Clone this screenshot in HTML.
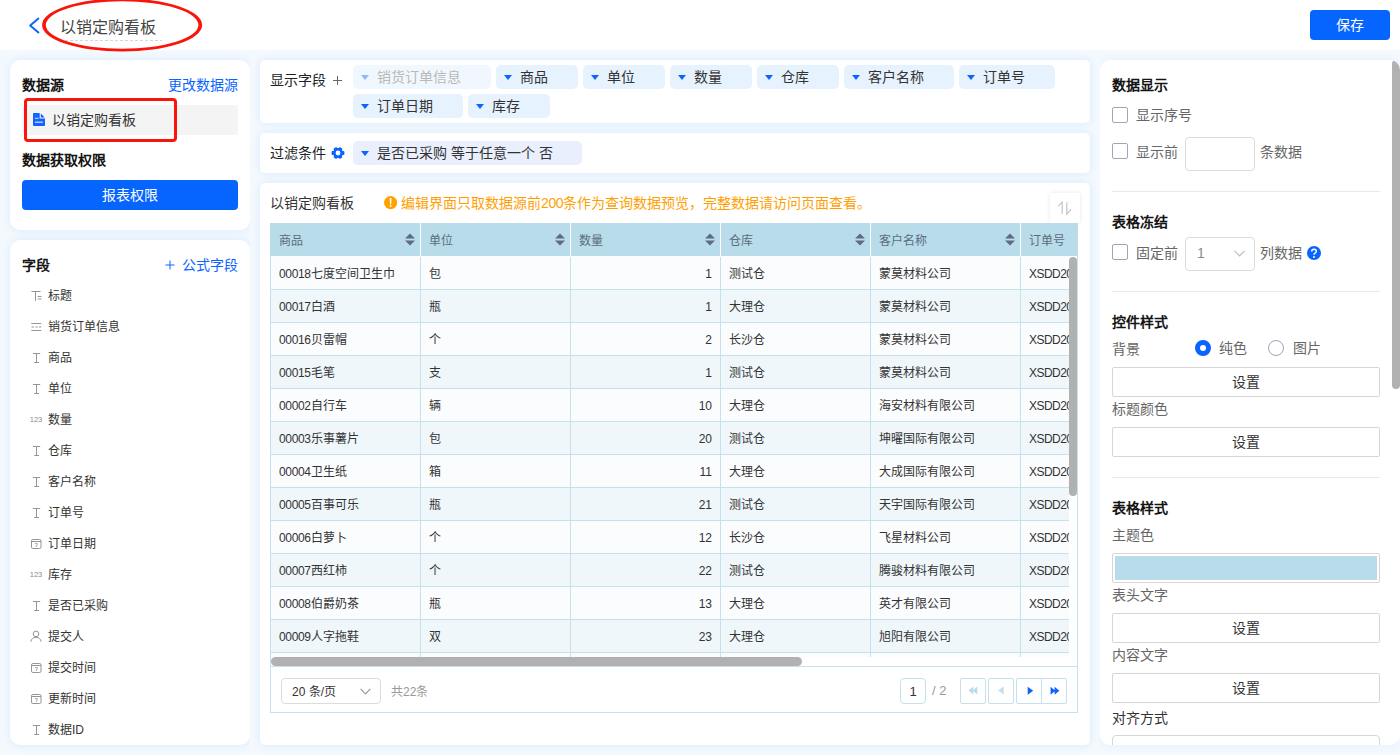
<!DOCTYPE html>
<html lang="zh-CN">
<head>
<meta charset="utf-8">
<title>以销定购看板</title>
<style>
*{box-sizing:border-box;margin:0;padding:0}
html,body{width:1400px;height:755px;overflow:hidden}
body{background:#f4f9fe;font-family:"Liberation Sans",sans-serif;font-size:14px;color:#333;position:relative}
.abs{position:absolute}
.col{position:absolute;top:50px;height:705px;overflow:hidden}
.hdr{position:absolute;left:0;top:0;width:1400px;height:50px;background:#fff}
.panel{position:absolute;background:#fff;box-shadow:0 0 10px #d8e9fc}
.r10{border-radius:10px}
.r4{border-radius:5px}
.t{position:absolute;white-space:nowrap;line-height:20px;height:20px}
.b{font-weight:bold;color:#141414}
.blue{color:#0a65ff}
.g6{color:#666}
.fi{position:absolute;left:0;width:240px;height:16px}
.fld{position:absolute;left:38px;top:0;font-size:12px;line-height:16px;height:16px;white-space:nowrap;color:#333}
.ico{position:absolute;left:19px;top:1px;width:14px;height:14px}
.num{position:absolute;left:18px;top:1px;width:16px;height:14px;font-size:7.6px;line-height:14px;color:#8c8c8c;text-align:center;letter-spacing:0}
.chip{position:absolute;height:24px;border-radius:5px;background:#e6f2fe;font-size:14px;line-height:24px;color:#333;white-space:nowrap;padding-left:24px}
.chip:before{content:"";position:absolute;left:8px;top:10px;border-left:4px solid transparent;border-right:4px solid transparent;border-top:5px solid #0a65ff}
.chip.dis{background:#f0f7ff;color:#b9b9b9}
.chip.dis:before{border-top-color:#8fb8ff}
.th{position:absolute;top:0;height:33px;width:151px;background:#b8dcea;color:#5d6b7c;font-size:12px;line-height:36px;padding-left:8px;border-left:1px solid #fff;white-space:nowrap}
.srt{position:absolute;left:134px;top:10px;width:10px;height:13px}
.row{position:absolute;left:0;width:900px;height:33px;border-bottom:1px solid #c5e1ed;background:#fbfcfe}
.row.e{background:#eff7fb}
.td{position:absolute;top:0;height:33px;width:150px;font-size:12px;line-height:35px;padding:0 8px;border-right:1px solid #c5e1ed;white-space:nowrap;color:#333;overflow:hidden}
.td.n{text-align:right}
.d{letter-spacing:-.35px}
.cb{position:absolute;left:12px;width:16px;height:16px;border:1px solid #a3a3bb;border-radius:2px;background:#fff}
.sep{position:absolute;left:12px;width:268px;height:1px;background:#e9e9e9}
.btn{position:absolute;left:12px;width:268px;height:30px;border:1px solid #d6d6d6;border-radius:2px;background:#fff;text-align:center;line-height:28px;font-size:14px;color:#333}
.inp{position:absolute;border:1px solid #dcdcdc;border-radius:4px;background:#fff}
.pg{position:absolute;top:11px;width:26px;height:26px;border:1px solid #c5e1ed;border-radius:2px;background:#fff}
</style>
</head>
<body>

<!-- header -->
<div class="hdr">
  <svg class="abs" style="left:27px;top:15px" width="14" height="20" viewBox="0 0 14 20"><path d="M11.4 3.6 L3.2 10.5 L11.4 17.4" fill="none" stroke="#0a65ff" stroke-width="2" stroke-linecap="round" stroke-linejoin="round"/></svg>
  <div class="t" style="left:60px;top:16px;font-size:16px;line-height:24px;height:24px;color:#444">以销定购看板</div>
  <svg class="abs" style="left:60px;top:40px" width="102" height="1" viewBox="0 0 102 1"><path d="M0 .5 H102" stroke="#d6d6d6" stroke-width="1" stroke-dasharray="3 2"/></svg>
  <div class="abs" style="left:1310px;top:10px;width:80px;height:30px;border-radius:4px;background:#0665ff;color:#fff;text-align:center;line-height:30px;font-size:14px">保存</div>
</div>

<div class="col" style="left:0;width:250px">
<!-- left panel 1 -->
<div class="panel r10" style="left:10px;top:10px;width:240px;height:170px">
  <div class="t b" style="left:12px;top:15px">数据源</div>
  <div class="t blue" style="right:12px;top:15px">更改数据源</div>
  <div class="abs" style="left:12px;top:45px;width:216px;height:30px;background:#f4f4f4;border-radius:2px"></div>
  <svg class="abs" style="left:23px;top:53px" width="12" height="13" viewBox="0 0 12 13"><path d="M.8 0 H6.7 V5.5 H12 V12.2 Q12 13 11.2 13 H.8 Q0 13 0 12.2 V.8 Q0 0 .8 0 Z" fill="#1463ff"/><path d="M7.8 .6 L11.7 4.5 H7.8 Z" fill="#1463ff"/><rect x="2" y="4.8" width="3.6" height="1" fill="#fff" opacity=".8"/><rect x="2" y="8.6" width="7.9" height="1.1" fill="#fff" opacity=".9"/></svg>
  <div class="t" style="left:42px;top:50px;color:#333">以销定购看板</div>
  <div class="abs" style="left:14px;top:38px;width:153px;height:44px;border:3px solid #fa140a;border-radius:4px"></div>
  <div class="t b" style="left:12px;top:90px">数据获取权限</div>
  <div class="abs" style="left:12px;top:120px;width:216px;height:30px;border-radius:4px;background:#0665ff;color:#fff;text-align:center;line-height:30px">报表权限</div>
</div>

<!-- left panel 2 -->
<div class="panel r10" style="left:10px;top:190px;width:240px;height:505px;overflow:hidden">
  <div class="t b" style="left:12px;top:15px">字段</div>
  <div class="t blue" style="right:12px;top:15px">公式字段</div>
  <svg class="abs" style="left:155px;top:20px" width="10" height="10" viewBox="0 0 10 10"><path d="M5 .5 V9.5 M.5 5 H9.5" stroke="#0a65ff" stroke-width="1" fill="none"/></svg>
  <div class="fi" style="top:48px"><svg class="ico" viewBox="0 0 14 14"><path d="M2.5 2.5 H11.5 M6.5 2.5 V11.8 M8.7 7.5 H12.5 M8.7 10 H12.5" fill="none" stroke="#959595" stroke-width="1"/></svg><div class="fld">标题</div></div>
  <div class="fi" style="top:79px"><svg class="ico" viewBox="0 0 14 14"><path d="M2.3 3.5 H12.2 M2.5 7 H5 M6.5 7 H8.7 M10 7 H12.2 M2.3 10.5 H12.2" fill="none" stroke="#959595" stroke-width="1"/></svg><div class="fld">销货订单信息</div></div>
  <div class="fi" style="top:110px"><svg class="ico" viewBox="0 0 14 14"><path d="M3.9 2.5 H11.2 M7.5 2.5 V11.5 M5.2 11.5 H10.1" fill="none" stroke="#959595" stroke-width="1"/></svg><div class="fld">商品</div></div>
  <div class="fi" style="top:141px"><svg class="ico" viewBox="0 0 14 14"><path d="M3.9 2.5 H11.2 M7.5 2.5 V11.5 M5.2 11.5 H10.1" fill="none" stroke="#959595" stroke-width="1"/></svg><div class="fld">单位</div></div>
  <div class="fi" style="top:172px"><div class="num">123</div><div class="fld">数量</div></div>
  <div class="fi" style="top:203px"><svg class="ico" viewBox="0 0 14 14"><path d="M3.9 2.5 H11.2 M7.5 2.5 V11.5 M5.2 11.5 H10.1" fill="none" stroke="#959595" stroke-width="1"/></svg><div class="fld">仓库</div></div>
  <div class="fi" style="top:234px"><svg class="ico" viewBox="0 0 14 14"><path d="M3.9 2.5 H11.2 M7.5 2.5 V11.5 M5.2 11.5 H10.1" fill="none" stroke="#959595" stroke-width="1"/></svg><div class="fld">客户名称</div></div>
  <div class="fi" style="top:265px"><svg class="ico" viewBox="0 0 14 14"><path d="M3.9 2.5 H11.2 M7.5 2.5 V11.5 M5.2 11.5 H10.1" fill="none" stroke="#959595" stroke-width="1"/></svg><div class="fld">订单号</div></div>
  <div class="fi" style="top:296px"><svg class="ico" viewBox="0 0 14 14"><rect x="2.5" y="2.5" width="9.5" height="9" rx="1.4" fill="none" stroke="#959595" stroke-width="1"/><path d="M2.5 4.5 H12" stroke="#959595" stroke-width="1" fill="none"/><path d="M5.9 6.6 H8.5 L7.1 10" stroke="#959595" stroke-width=".8" fill="none"/></svg><div class="fld">订单日期</div></div>
  <div class="fi" style="top:327px"><div class="num">123</div><div class="fld">库存</div></div>
  <div class="fi" style="top:358px"><svg class="ico" viewBox="0 0 14 14"><path d="M3.9 2.5 H11.2 M7.5 2.5 V11.5 M5.2 11.5 H10.1" fill="none" stroke="#959595" stroke-width="1"/></svg><div class="fld">是否已采购</div></div>
  <div class="fi" style="top:389px"><svg class="ico" viewBox="0 0 14 14"><circle cx="7" cy="3.9" r="2.8" fill="none" stroke="#959595" stroke-width="1"/><path d="M1.9 11.7 Q2.4 7.4 7 7.4 Q11.6 7.4 12.1 11.7" fill="none" stroke="#959595" stroke-width="1"/></svg><div class="fld">提交人</div></div>
  <div class="fi" style="top:420px"><svg class="ico" viewBox="0 0 14 14"><rect x="2.5" y="2.5" width="9.5" height="9" rx="1.4" fill="none" stroke="#959595" stroke-width="1"/><path d="M2.5 4.5 H12" stroke="#959595" stroke-width="1" fill="none"/><path d="M5.9 6.6 H8.5 L7.1 10" stroke="#959595" stroke-width=".8" fill="none"/></svg><div class="fld">提交时间</div></div>
  <div class="fi" style="top:451px"><svg class="ico" viewBox="0 0 14 14"><rect x="2.5" y="2.5" width="9.5" height="9" rx="1.4" fill="none" stroke="#959595" stroke-width="1"/><path d="M2.5 4.5 H12" stroke="#959595" stroke-width="1" fill="none"/><path d="M5.9 6.6 H8.5 L7.1 10" stroke="#959595" stroke-width=".8" fill="none"/></svg><div class="fld">更新时间</div></div>
  <div class="fi" style="top:482px"><svg class="ico" viewBox="0 0 14 14"><path d="M3.9 2.5 H11.2 M7.5 2.5 V11.5 M5.2 11.5 H10.1" fill="none" stroke="#959595" stroke-width="1"/></svg><div class="fld">数据ID</div></div>
</div>

</div>

<div class="col" style="left:250px;width:850px">
<!-- middle panel 1 : display fields -->
<div class="panel r4" style="left:10px;top:10px;width:830px;height:63px">
  <div class="t" style="left:10px;top:10px;color:#222">显示字段</div>
  <svg class="abs" style="left:73px;top:16px" width="9" height="9" viewBox="0 0 9 9"><path d="M4.5 0 V9 M0 4.5 H9" stroke="#666" stroke-width="1" fill="none"/></svg>
  <div class="chip dis" style="left:93px;top:5px;width:138px">销货订单信息</div>
  <div class="chip" style="left:236px;top:5px;width:82px">商品</div>
  <div class="chip" style="left:323px;top:5px;width:82px">单位</div>
  <div class="chip" style="left:410px;top:5px;width:82px">数量</div>
  <div class="chip" style="left:497px;top:5px;width:82px">仓库</div>
  <div class="chip" style="left:584px;top:5px;width:110px">客户名称</div>
  <div class="chip" style="left:699px;top:5px;width:96px">订单号</div>
  <div class="chip" style="left:93px;top:34px;width:110px">订单日期</div>
  <div class="chip" style="left:208px;top:34px;width:82px">库存</div>
</div>

<!-- middle panel 2 : filter -->
<div class="panel r4" style="left:10px;top:83px;width:830px;height:40px">
  <div class="t" style="left:10px;top:10px;color:#222">过滤条件</div>
  <svg class="abs" style="left:70.5px;top:13px" width="14" height="14" viewBox="0 0 14 14"><g fill="#0a65ff"><circle cx="7" cy="7" r="5"/><rect x=".6" y="5.1" width="12.8" height="3.8" rx=".9"/><rect x="1" y="5.1" width="12" height="3.8" rx=".9" transform="rotate(60 7 7)"/><rect x="1" y="5.1" width="12" height="3.8" rx=".9" transform="rotate(120 7 7)"/></g><circle cx="7" cy="7" r="2.45" fill="#fff"/></svg>
  <div class="chip" style="left:93px;top:8px;width:229px;background:#e9effc">是否已采购 等于任意一个 否</div>
</div>

<!-- middle panel 3 : table -->
<div class="panel r4" style="left:10px;top:133px;width:830px;height:562px">
  <div class="t" style="left:10px;top:10px;color:#333">以销定购看板</div>
  <svg class="abs" style="left:124px;top:13px" width="14" height="14" viewBox="0 0 14 14"><circle cx="6.6" cy="6.6" r="6.6" fill="#ffa200"/><path d="M5.7 2 H7.5 L7.2 8.6 H6 Z" fill="#fff"/><rect x="5.8" y="9.3" width="1.6" height="1.6" rx=".3" fill="#fff"/></svg>
  <div class="t" style="left:141px;top:10px;color:#ff9f05">编辑界面只取数据源前<span class="d">200</span>条作为查询数据预览，完整数据请访问页面查看。</div>
  <div class="abs" style="left:790px;top:10px;width:30px;height:30px;background:#fff;box-shadow:0 0 4px rgba(0,0,0,.10)"></div>
  <svg class="abs" style="left:797px;top:18px" width="16" height="15" viewBox="0 0 16 15"><path d="M1.2 5.2 L5.2 1.2 V13.1 M9.8 1.2 V13.1 L14.1 8.2" fill="none" stroke="#c4c4c4" stroke-width="1.2"/></svg>

  <div class="abs" style="left:10px;top:40px;width:808px;height:490px;border:1px solid #c5e1ed;border-top:none">
    <div class="abs" style="left:-1px;top:0;width:808px;height:33px;background:#b8dcea;overflow:hidden"><div class="th" style="left:0px;border-left-color:#b8dcea">商品<svg class="srt" viewBox="0 0 10 13"><path d="M5 .6 L10 5.4 H0 Z M5 12.4 L10 7.6 H0 Z" fill="#5f6b86"/></svg></div><div class="th" style="left:150px">单位<svg class="srt" viewBox="0 0 10 13"><path d="M5 .6 L10 5.4 H0 Z M5 12.4 L10 7.6 H0 Z" fill="#5f6b86"/></svg></div><div class="th" style="left:300px">数量<svg class="srt" viewBox="0 0 10 13"><path d="M5 .6 L10 5.4 H0 Z M5 12.4 L10 7.6 H0 Z" fill="#5f6b86"/></svg></div><div class="th" style="left:450px">仓库<svg class="srt" viewBox="0 0 10 13"><path d="M5 .6 L10 5.4 H0 Z M5 12.4 L10 7.6 H0 Z" fill="#5f6b86"/></svg></div><div class="th" style="left:600px">客户名称<svg class="srt" viewBox="0 0 10 13"><path d="M5 .6 L10 5.4 H0 Z M5 12.4 L10 7.6 H0 Z" fill="#5f6b86"/></svg></div><div class="th" style="left:750px">订单号</div></div>
    <div class="abs" style="left:0;top:33px;width:798px;height:401px;overflow:hidden;background:#fbfcfe">
      <div class="row" style="top:1px"><div class="td" style="left:0px"><span class="d">00018</span>七度空间卫生巾</div><div class="td" style="left:150px">包</div><div class="td n" style="left:300px">1</div><div class="td" style="left:450px">测试仓</div><div class="td" style="left:600px">蒙莫材料公司</div><div class="td" style="left:750px;letter-spacing:-.55px">XSDD20</div></div>
      <div class="row e" style="top:34px"><div class="td" style="left:0px"><span class="d">00017</span>白酒</div><div class="td" style="left:150px">瓶</div><div class="td n" style="left:300px">1</div><div class="td" style="left:450px">大理仓</div><div class="td" style="left:600px">蒙莫材料公司</div><div class="td" style="left:750px;letter-spacing:-.55px">XSDD20</div></div>
      <div class="row" style="top:67px"><div class="td" style="left:0px"><span class="d">00016</span>贝雷帽</div><div class="td" style="left:150px">个</div><div class="td n" style="left:300px">2</div><div class="td" style="left:450px">长沙仓</div><div class="td" style="left:600px">蒙莫材料公司</div><div class="td" style="left:750px;letter-spacing:-.55px">XSDD20</div></div>
      <div class="row e" style="top:100px"><div class="td" style="left:0px"><span class="d">00015</span>毛笔</div><div class="td" style="left:150px">支</div><div class="td n" style="left:300px">1</div><div class="td" style="left:450px">测试仓</div><div class="td" style="left:600px">蒙莫材料公司</div><div class="td" style="left:750px;letter-spacing:-.55px">XSDD20</div></div>
      <div class="row" style="top:133px"><div class="td" style="left:0px"><span class="d">00002</span>自行车</div><div class="td" style="left:150px">辆</div><div class="td n" style="left:300px">10</div><div class="td" style="left:450px">大理仓</div><div class="td" style="left:600px">海安材料有限公司</div><div class="td" style="left:750px;letter-spacing:-.55px">XSDD20</div></div>
      <div class="row e" style="top:166px"><div class="td" style="left:0px"><span class="d">00003</span>乐事薯片</div><div class="td" style="left:150px">包</div><div class="td n" style="left:300px">20</div><div class="td" style="left:450px">测试仓</div><div class="td" style="left:600px">坤曜国际有限公司</div><div class="td" style="left:750px;letter-spacing:-.55px">XSDD20</div></div>
      <div class="row" style="top:199px"><div class="td" style="left:0px"><span class="d">00004</span>卫生纸</div><div class="td" style="left:150px">箱</div><div class="td n" style="left:300px">11</div><div class="td" style="left:450px">大理仓</div><div class="td" style="left:600px">大成国际有限公司</div><div class="td" style="left:750px;letter-spacing:-.55px">XSDD20</div></div>
      <div class="row e" style="top:232px"><div class="td" style="left:0px"><span class="d">00005</span>百事可乐</div><div class="td" style="left:150px">瓶</div><div class="td n" style="left:300px">21</div><div class="td" style="left:450px">测试仓</div><div class="td" style="left:600px">天宇国际有限公司</div><div class="td" style="left:750px;letter-spacing:-.55px">XSDD20</div></div>
      <div class="row" style="top:265px"><div class="td" style="left:0px"><span class="d">00006</span>白萝卜</div><div class="td" style="left:150px">个</div><div class="td n" style="left:300px">12</div><div class="td" style="left:450px">长沙仓</div><div class="td" style="left:600px">飞星材料公司</div><div class="td" style="left:750px;letter-spacing:-.55px">XSDD20</div></div>
      <div class="row e" style="top:298px"><div class="td" style="left:0px"><span class="d">00007</span>西红柿</div><div class="td" style="left:150px">个</div><div class="td n" style="left:300px">22</div><div class="td" style="left:450px">测试仓</div><div class="td" style="left:600px">腾骏材料有限公司</div><div class="td" style="left:750px;letter-spacing:-.55px">XSDD20</div></div>
      <div class="row" style="top:331px"><div class="td" style="left:0px"><span class="d">00008</span>伯爵奶茶</div><div class="td" style="left:150px">瓶</div><div class="td n" style="left:300px">13</div><div class="td" style="left:450px">大理仓</div><div class="td" style="left:600px">英才有限公司</div><div class="td" style="left:750px;letter-spacing:-.55px">XSDD20</div></div>
      <div class="row e" style="top:364px"><div class="td" style="left:0px"><span class="d">00009</span>人字拖鞋</div><div class="td" style="left:150px">双</div><div class="td n" style="left:300px">23</div><div class="td" style="left:450px">大理仓</div><div class="td" style="left:600px">旭阳有限公司</div><div class="td" style="left:750px;letter-spacing:-.55px">XSDD20</div></div>
      <div class="row" style="top:397px"><div class="td" style="left:0px"></div><div class="td" style="left:150px"></div><div class="td n" style="left:300px"></div><div class="td" style="left:450px"></div><div class="td" style="left:600px"></div><div class="td" style="left:750px;letter-spacing:-.55px"></div></div>
    </div>
    <div class="abs" style="left:798px;top:34px;width:8px;height:239px;border-radius:4px;background:#b1b1b1"></div>
    <div class="abs" style="left:0;top:434px;width:806px;height:9px;background:#fff"></div>
    <div class="abs" style="left:0;top:434px;width:531px;height:9px;border-radius:4.5px;background:#b1b1b1"></div>
    <div class="abs" style="left:0;top:443px;width:806px;height:1px;background:#c5e1ed"></div>
    <div class="abs" style="left:0;top:444px;width:806px;height:45px">
      <div class="abs" style="left:10px;top:11px;width:100px;height:26px;border:1px solid #dcdcdc;border-radius:4px"></div>
      <div class="t" style="left:21px;top:15px;font-size:12px;color:#333">20 条/页</div>
      <svg class="abs" style="left:89px;top:21px" width="11" height="7" viewBox="0 0 11 7"><path d="M.6 .8 L5.5 5.8 L10.4 .8" fill="none" stroke="#9a9a9a" stroke-width="1.2"/></svg>
      <div class="t" style="left:120px;top:15px;font-size:12px;color:#999">共22条</div>
      <div class="pg" style="left:629px;border-radius:4px;text-align:center;line-height:25px;font-size:13px;color:#333">1</div>
      <div class="t" style="left:661px;top:14px;font-size:13px;color:#999">/ 2</div>
      <div class="pg" style="left:689px"><svg class="abs" style="left:-1px;top:-1px" width="26" height="26" viewBox="0 0 26 26"><path d="M8.5 12.5 L13.2 8.5 V16.5 Z M12.6 12.5 L17.3 8.5 V16.5 Z" fill="#b8dcea"/></svg></div>
      <div class="pg" style="left:717px"><svg class="abs" style="left:-1px;top:-1px" width="26" height="26" viewBox="0 0 26 26"><path d="M9.9 12.5 L15.8 8.5 V16.5 Z" fill="#c4e1ed"/></svg></div>
      <div class="pg" style="left:745px;border-radius:2px 0 0 2px"><svg class="abs" style="left:-1px;top:-1px" width="26" height="26" viewBox="0 0 26 26"><path d="M17.2 12.7 L11.7 8.7 V16.7 Z" fill="#0a65ff"/></svg></div>
      <div class="pg" style="left:770px;border-radius:0 2px 2px 0"><svg class="abs" style="left:-1px;top:-1px" width="26" height="26" viewBox="0 0 26 26"><path d="M14.3 12.7 L9.6 8.7 V16.7 Z M18.3 12.7 L13.6 8.7 V16.7 Z" fill="#0a65ff"/></svg></div>
    </div>
  </div>
</div>

</div>

<div class="col" style="left:1100px;width:300px">
<!-- right panel -->
<div class="panel r10" style="left:0;top:10px;box-shadow:0 0 10px #e2effd;width:300px;height:685px;overflow:hidden">
  <div class="t b" style="left:12px;top:15px">数据显示</div>
  <div class="cb" style="top:47px"></div>
  <div class="t g6" style="left:36px;top:45px">显示序号</div>
  <div class="cb" style="top:83px"></div>
  <div class="t g6" style="left:36px;top:82px">显示前</div>
  <div class="inp" style="left:85px;top:77px;width:70px;height:34px"></div>
  <div class="t g6" style="left:160px;top:82px">条数据</div>
  <div class="sep" style="top:131px"></div>

  <div class="t b" style="left:12px;top:152px">表格冻结</div>
  <div class="cb" style="top:184px"></div>
  <div class="t g6" style="left:36px;top:183px">固定前</div>
  <div class="inp" style="left:85px;top:177px;width:70px;height:34px"></div>
  <div class="t" style="left:97px;top:183px;color:#8c8c8c">1</div>
  <svg class="abs" style="left:134px;top:190px" width="11" height="7" viewBox="0 0 11 7"><path d="M.6 .8 L5.5 5.8 L10.4 .8" fill="none" stroke="#bdbdbd" stroke-width="1.2"/></svg>
  <div class="t g6" style="left:160px;top:183px">列数据</div>
  <svg class="abs" style="left:207px;top:186px" width="14" height="14" viewBox="0 0 14 14"><circle cx="7" cy="7" r="7" fill="#0a65ff"/><path d="M4.7 5.6 Q4.7 3.3 7 3.3 Q9.3 3.3 9.3 5.3 Q9.3 6.5 8 7.2 Q7 7.8 7 8.8" fill="none" stroke="#fff" stroke-width="1.5"/><circle cx="7" cy="10.9" r="1" fill="#fff"/></svg>
  <div class="sep" style="top:231px"></div>

  <div class="t b" style="left:12px;top:252px">控件样式</div>
  <div class="t g6" style="left:12px;top:279px">背景</div>
  <div class="abs" style="left:95px;top:280px;width:16px;height:16px;border-radius:50%;border:5px solid #0a65ff;background:#fff"></div>
  <div class="t g6" style="left:119px;top:278px">纯色</div>
  <div class="abs" style="left:168px;top:280px;width:16px;height:16px;border-radius:50%;border:1px solid #a3a3bb;background:#fff"></div>
  <div class="t g6" style="left:193px;top:278px">图片</div>
  <div class="btn" style="top:307px">设置</div>
  <div class="t g6" style="left:12px;top:339px">标题颜色</div>
  <div class="btn" style="top:367px">设置</div>
  <div class="sep" style="top:417px"></div>

  <div class="t b" style="left:12px;top:438px">表格样式</div>
  <div class="t g6" style="left:12px;top:465px">主题色</div>
  <div class="btn" style="top:493px;padding:2px"><div style="width:100%;height:100%;background:#b8dcea"></div></div>
  <div class="t g6" style="left:12px;top:525px">表头文字</div>
  <div class="btn" style="top:553px">设置</div>
  <div class="t g6" style="left:12px;top:585px">内容文字</div>
  <div class="btn" style="top:613px">设置</div>
  <div class="t" style="left:12px;top:648px;color:#333">对齐方式</div>
  <div class="btn" style="top:675px;border-radius:4px;height:33px"></div>
  <div class="abs" style="left:292px;top:0;width:8px;height:329px;border-radius:4px;background:#b1b1b1"></div>
</div>
</div>

<svg class="abs" style="left:38px;top:-6px;z-index:9" width="170" height="62" viewBox="0 0 170 62"><path fill-rule="evenodd" fill="#fa140a" d="M4.1 31 a80 26.6 0 1 0 160 0 a80 26.6 0 1 0 -160 0 Z M7.8 31 a76.3 23.7 0 1 0 152.6 0 a76.3 23.7 0 1 0 -152.6 0 Z"/></svg>
</body>
</html>
